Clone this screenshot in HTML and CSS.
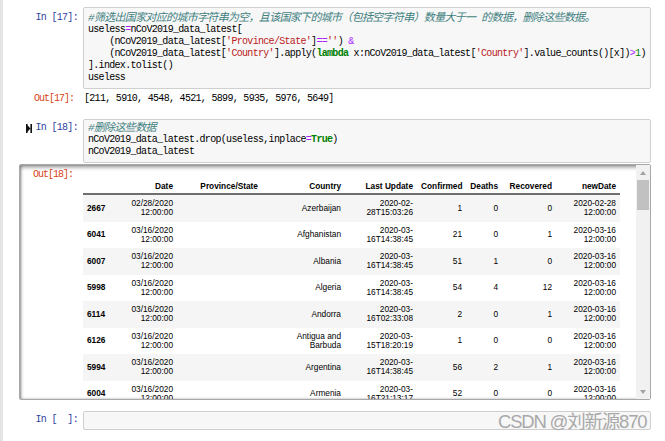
FILE: index.html
```html
<!DOCTYPE html>
<html>
<head>
<meta charset="utf-8">
<link rel="stylesheet" href="styles.css">
</head>
<body>
<div class="nb">
  <div class="cell">
    <div class="row">
      <div class="prompt in">In [17]:</div>
      <div class="input">
        <div class="ln cl"><span class="cm">#筛选出国家对应的城市字符串为空，且该国家下的城市（包括空字符串）数量大于一 的数据，删除这些数据。</span></div>
        <div class="ln"><span>useless</span><span class="op">=</span><span>nCoV2019_data_latest[</span></div>
        <div class="ln"><span>    (nCoV2019_data_latest[</span><span class="st">'Province/State'</span><span>]</span><span class="op">==</span><span class="st">''</span><span>) </span><span class="op">&amp;</span></div>
        <div class="ln"><span>    (nCoV2019_data_latest[</span><span class="st">'Country'</span><span>].apply(</span><span class="kw">lambda</span><span> x:nCoV2019_data_latest[</span><span class="st">'Country'</span><span>].value_counts()[x])</span><span class="op">&gt;</span><span class="nu">1</span><span>)</span></div>
        <div class="ln"><span>].index.tolist()</span></div>
        <div class="ln"><span>useless</span></div>
      </div>
    </div>
    <div class="row out-row">
      <div class="prompt out">Out[17]:</div>
      <div class="output">[211, 5910, 4548, 4521, 5899, 5935, 5976, 5649]</div>
    </div>
  </div>

  <div class="cell c18">
    <div class="row">
      <div class="prompt in p18"><svg class="mark" width="6" height="9" viewBox="0 0 6 9"><path d="M0 0h1.6v9H0z M1.6 1.2L4.4 4.5 1.6 7.8z M4.4 0H6v9H4.4z" fill="#111"/></svg><span>In [18]:</span></div>
      <div class="input in18">
        <div class="ln cl"><span class="cm">#删除这些数据</span></div>
        <div class="ln"><span>nCoV2019_data_latest.drop(useless,inplace</span><span class="op">=</span><span class="kw">True</span><span>)</span></div>
        <div class="ln"><span>nCoV2019_data_latest</span></div>
      </div>
    </div>
    <div class="scrollbox">
      <div class="scroll-content">
        <div class="prompt out out18">Out[18]:</div>
        <table class="df">
          <colgroup>
            <col class="w-idx"><col class="w-date"><col class="w-prov"><col class="w-country"><col class="w-upd"><col class="w-conf"><col class="w-death"><col class="w-rec"><col class="w-new">
          </colgroup>
          <thead>
            <tr><th></th><th>Date</th><th>Province/State</th><th>Country</th><th>Last Update</th><th>Confirmed</th><th>Deaths</th><th>Recovered</th><th>newDate</th></tr>
          </thead>
          <tbody>
            <tr><th>2667</th><td>02/28/2020<br>12:00:00</td><td></td><td>Azerbaijan</td><td>2020-02-<br>28T15:03:26</td><td>1</td><td>0</td><td>0</td><td>2020-02-28<br>12:00:00</td></tr>
            <tr><th>6041</th><td>03/16/2020<br>12:00:00</td><td></td><td>Afghanistan</td><td>2020-03-<br>16T14:38:45</td><td>21</td><td>0</td><td>1</td><td>2020-03-16<br>12:00:00</td></tr>
            <tr><th>6007</th><td>03/16/2020<br>12:00:00</td><td></td><td>Albania</td><td>2020-03-<br>16T14:38:45</td><td>51</td><td>1</td><td>0</td><td>2020-03-16<br>12:00:00</td></tr>
            <tr><th>5998</th><td>03/16/2020<br>12:00:00</td><td></td><td>Algeria</td><td>2020-03-<br>16T14:38:45</td><td>54</td><td>4</td><td>12</td><td>2020-03-16<br>12:00:00</td></tr>
            <tr><th>6114</th><td>03/16/2020<br>12:00:00</td><td></td><td>Andorra</td><td>2020-03-<br>16T02:33:08</td><td>2</td><td>0</td><td>1</td><td>2020-03-16<br>12:00:00</td></tr>
            <tr><th>6126</th><td>03/16/2020<br>12:00:00</td><td></td><td>Antigua and<br>Barbuda</td><td>2020-03-<br>15T18:20:19</td><td>1</td><td>0</td><td>0</td><td>2020-03-16<br>12:00:00</td></tr>
            <tr><th>5994</th><td>03/16/2020<br>12:00:00</td><td></td><td>Argentina</td><td>2020-03-<br>16T14:38:45</td><td>56</td><td>2</td><td>1</td><td>2020-03-16<br>12:00:00</td></tr>
            <tr><th>6004</th><td>03/16/2020<br>12:00:00</td><td></td><td>Armenia</td><td>2020-03-<br>16T21:13:17</td><td>52</td><td>0</td><td>0</td><td>2020-03-16<br>12:00:00</td></tr>
          </tbody>
        </table>
      </div>
      <div class="sbar">
        <div class="sb-btn"><span class="arr-up"></span></div>
        <div class="sb-thumb"></div>
        <div class="sb-track"></div>
        <div class="sb-btn"><span class="arr-down"></span></div>
      </div>
    </div>
  </div>

  <div class="cell c-last">
    <div class="row">
      <div class="prompt in pl">In [  ]:</div>
      <div class="input empty"></div>
    </div>
  </div>

  <div class="watermark">CSDN @刘新源870</div>
</div>
</body>
</html>
```

FILE: styles.css
```css
* { box-sizing: border-box; }
html, body { margin: 0; padding: 0; background: #fff; }
body { font-family: "Liberation Mono", "Noto Sans CJK SC", monospace; }

.nb {
  position: relative;
  width: 665px;
  height: 441px;
  overflow: hidden;
  border-left: 3px solid #e4e4e4;
  padding-top: 7px;
}

.row { display: flex; align-items: flex-start; }

.prompt {
  width: 75px;
  flex: none;
  text-align: right;
  font-family: "Liberation Mono", monospace;
  font-size: 10px;
  line-height: 12px;
  letter-spacing: -0.69px;
  white-space: pre;
}
.prompt.in { color: #303f9f; padding-top: 5px; }
.prompt.p18 { padding-top: 3px; display: flex; justify-content: flex-end; align-items: center; }
.prompt.pl { padding-top: 3px; }
.mark { margin-right: 4px; flex: none; }
.prompt.out { color: #d84315; padding-right: 4px; letter-spacing: -1px; }

.input {
  flex: 1;
  margin: 0 14px 0 5px;
  background: #f7f7f7;
  border: 1px solid #cfcfcf;
  border-radius: 2px;
  padding: 4px 4px;
  font-family: "Liberation Mono", "Noto Sans CJK SC", monospace;
  font-size: 10px;
  line-height: 12px;
  letter-spacing: -0.69px;
  color: #000;
}
.ln { height: 12px; line-height: 12px; white-space: pre; }
.input.in18 { padding: 2px 4px 4px; }
.input.empty { padding: 2.5px 4px; height: 19px; }

.cm { font-style: italic; color: #408080; font-size: 11px; font-family: "Liberation Mono", "Noto Sans CJK SC", monospace; }
.st { color: #ba2121; }
.op { color: #aa22ff; }
.kw { color: #008000; font-weight: bold; }
.nu { color: #008000; }

.out-row { margin-top: 4px; }
.output {
  margin-left: 5px;
  padding-left: 1px;
  font-size: 10px;
  line-height: 12px;
  letter-spacing: -0.69px;
  color: #000;
  font-family: "Liberation Mono", monospace;
  white-space: pre;
}

.c18 { margin-top: 14px; }

.scrollbox {
  margin: 1px 14px 0 16px;
  height: 236px;
  display: flex;
  border: 1px solid #a8a8a8;
  border-radius: 2px;
  box-shadow: inset 0 2px 4px rgba(0,0,0,0.45), inset 1px 0 2px rgba(0,0,0,0.25);
  background: #fff;
}
.scroll-content {
  flex: 1;
  display: flex;
  align-items: flex-start;
  overflow: hidden;
  min-width: 0;
}
.prompt.out18 { width: 63px; padding-top: 4px; padding-right: 10px; }

.df {
  margin-top: 14px;
  border-collapse: collapse;
  table-layout: fixed;
  width: 537px;
  flex: none;
  font-family: "Liberation Sans", Arial, sans-serif;
  font-size: 8.3px;
  color: #000;
}
.w-idx { width: 37px; }
.w-date { width: 57px; }
.w-prov { width: 85px; }
.w-country { width: 83px; }
.w-upd { width: 72px; }
.w-conf { width: 49px; }
.w-death { width: 36px; }
.w-rec { width: 54px; }
.w-new { width: 64px; }

.df th, .df td {
  padding: 4px 4px;
  line-height: 9.25px;
  text-align: right;
  vertical-align: middle;
  white-space: nowrap;
}
.df thead th {
  font-weight: bold;
  padding: 2px 4px;
  line-height: 10px;
  border-bottom: 2px solid #6f6f6f;
  vertical-align: bottom;
}
.df tbody th { font-weight: bold; text-align: left; }
.df tbody tr:nth-child(odd) { background: #f5f5f5; }

.sbar {
  width: 14px;
  flex: none;
  background: #f1f1f1;
  display: flex;
  flex-direction: column;
}
.sb-btn {
  height: 15px;
  display: flex;
  align-items: center;
  justify-content: center;
  flex: none;
}
.sb-thumb { height: 30px; margin: 0 1px; background: #c1c1c1; flex: none; }
.sb-track { flex: 1; }
.arr-up { width: 0; height: 0; border-left: 3.5px solid transparent; border-right: 3.5px solid transparent; border-bottom: 4px solid #a3a3a3; }
.arr-down { width: 0; height: 0; border-left: 3.5px solid transparent; border-right: 3.5px solid transparent; border-top: 4px solid #a3a3a3; }

.c-last { margin-top: 11px; }

.watermark {
  position: absolute;
  left: 495px;
  top: 412px;
  font-family: "Liberation Sans", "Noto Sans CJK SC", sans-serif;
  font-size: 18.5px;
  line-height: 20px;
  letter-spacing: -1.2px;
  color: #a9a9a9;
  white-space: nowrap;
}
```
